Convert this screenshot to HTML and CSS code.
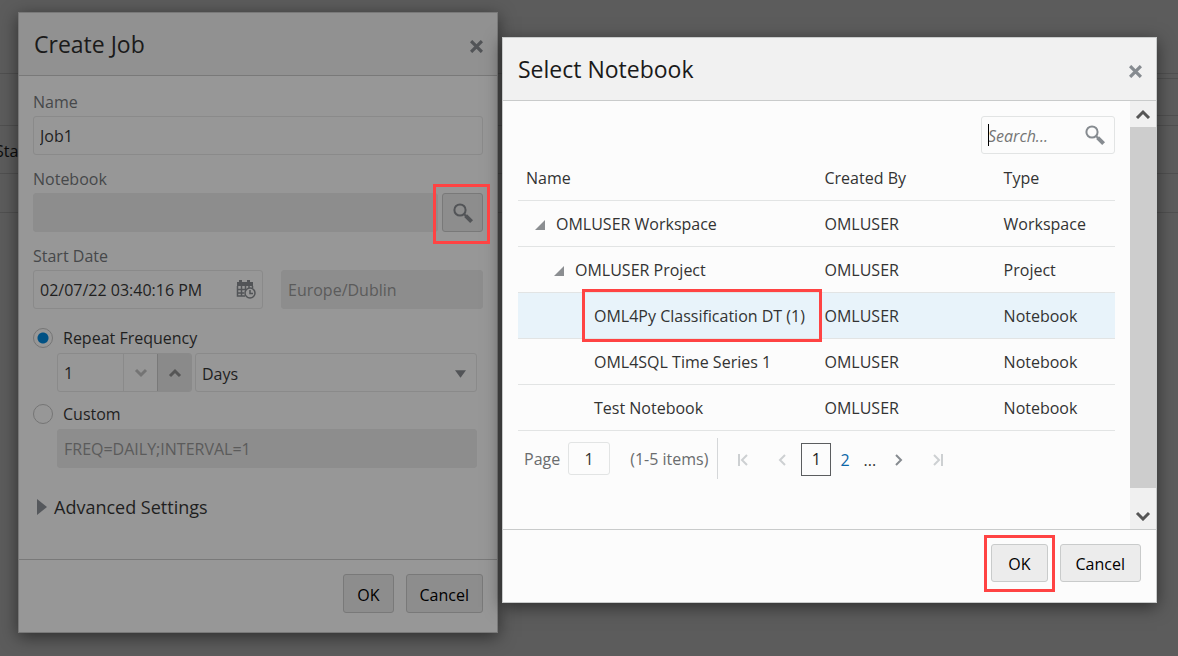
FILE: index.html
```
<!DOCTYPE html>
<html lang="en">
<head>
<meta charset="utf-8">
<meta name="viewport" content="width=device-width, initial-scale=1">
<title>Create Job</title>
<link rel="stylesheet" href="styles.css">
</head>
<body>
<div class="backdrop" aria-hidden="true">
  <div class="line line-title"></div>
  <div class="line line-toolbar"><div class="toolbar-box"></div></div>
  <div class="line line-head"><span>Start</span></div>
  <div class="line line-row"></div>
</div>

<main class="stage">
  <section class="dialog dialog-job" aria-labelledby="job-title">
    <header class="dialog-head">
      <h1 id="job-title">Create Job</h1>
      <button class="close" type="button" aria-label="Close"><svg viewBox="0 0 12 12"><path d="M1 1l10 10M11 1L1 11"/></svg></button>
    </header>
    <form class="job-body" id="job-form">
      <div class="field">
        <label for="name">Name</label>
        <input id="name" class="text" type="text" value="Job1">
      </div>
      <div class="field">
        <label for="notebook">Notebook</label>
        <div class="notebook-row">
          <input id="notebook" class="text muted" type="text" readonly>
          <button class="btn lookup marked" type="button" aria-label="Select notebook"><svg viewBox="0 0 20 20"><circle cx="7" cy="7" r="5.6"/><path class="grip" d="M11 11l2 2"/><path class="handle" d="M12.6 12.6l6 6"/></svg></button>
        </div>
      </div>
      <div class="field">
        <label for="start">Start Date</label>
        <div class="date-row">
          <div class="date">
            <input id="start" class="text" type="text" value="02/07/22 03:40:16 PM">
            <button class="icon" type="button" aria-label="Select date and time"><svg viewBox="0 0 20 20"><path class="fill" d="M1 3h2V1h3v2h5V1h3v2h3v4H1z"/><path d="M1.5 7v10H9M16.500 7v2M5.500 7v10M9.500 7v4M13 7v2M1 10.500h9M1 14h7"/><circle cx="14" cy="14" r="5"/><path d="M14 11v3.500h3"/></svg></button>
          </div>
          <input class="text muted" type="text" value="Europe/Dublin" aria-label="Time zone" readonly>
        </div>
      </div>
      <div class="choice choice-repeat">
        <label><input type="radio" name="freq" checked>Repeat Frequency</label>
        <div class="repeat-row">
          <div class="spinner">
            <input class="text" type="text" value="1" aria-label="Interval">
            <button class="down" type="button" aria-label="Decrease"><svg viewBox="0 0 14 10"><path d="M2 2l5 5 5-5"/></svg></button>
            <button class="up" type="button" aria-label="Increase"><svg viewBox="0 0 14 10"><path d="M2 8l5-5 5 5"/></svg></button>
          </div>
          <div class="select">
            <select aria-label="Unit"><option>Days</option></select>
            <svg viewBox="0 0 12 8"><path d="M0 0h12L6 8z"/></svg>
          </div>
        </div>
      </div>
      <div class="choice">
        <label><input type="radio" name="freq">Custom</label>
        <input class="text muted custom" type="text" value="FREQ=DAILY;INTERVAL=1" aria-label="Custom frequency" readonly>
      </div>
      <button class="advanced" type="button" aria-expanded="false"><svg viewBox="0 0 10 16"><path d="M0 0l10 8-10 8z"/></svg>Advanced Settings</button>
    </form>
    <footer class="dialog-foot">
      <button class="btn" type="submit" form="job-form">OK</button>
      <button class="btn" type="button">Cancel</button>
    </footer>
  </section>

  <section class="dialog dialog-select" aria-labelledby="select-title">
    <header class="dialog-head">
      <h2 id="select-title">Select Notebook</h2>
      <button class="close" type="button" aria-label="Close"><svg viewBox="0 0 12 12"><path d="M1 1l10 10M11 1L1 11"/></svg></button>
    </header>
    <div class="scroller">
      <div class="select-body">
        <div class="search">
          <span class="caret"></span>
          <input type="search" placeholder="Search..." aria-label="Search">
          <button class="icon" type="button" aria-label="Search"><svg viewBox="0 0 20 20"><circle cx="7" cy="7" r="5.600"/><path class="grip" d="M11 11l2 2"/><path class="handle" d="M12.600 12.600l6 6"/></svg></button>
        </div>
        <table>
          <thead>
            <tr><th class="col-name">Name</th><th class="col-by">Created By</th><th>Type</th></tr>
          </thead>
          <tbody>
            <tr><td class="level-1"><svg class="tree" viewBox="0 0 10 10"><path d="M10 0v10H0z"/></svg>OMLUSER Workspace</td><td>OMLUSER</td><td>Workspace</td></tr>
            <tr><td class="level-2"><svg class="tree" viewBox="0 0 10 10"><path d="M10 0v10H0z"/></svg>OMLUSER Project</td><td>OMLUSER</td><td>Project</td></tr>
            <tr class="selected"><td class="level-3 marked">OML4Py Classification DT (1)</td><td>OMLUSER</td><td>Notebook</td></tr>
            <tr><td class="level-3">OML4SQL Time Series 1</td><td>OMLUSER</td><td>Notebook</td></tr>
            <tr><td class="level-3">Test Notebook</td><td>OMLUSER</td><td>Notebook</td></tr>
          </tbody>
        </table>
        <nav class="pager" aria-label="Pages">
          <div class="pager-input">
            <label for="page">Page</label>
            <input id="page" type="text" value="1">
            <span>(1-5 items)</span>
          </div>
          <div class="pager-nav">
            <button type="button" aria-label="First page" disabled><svg viewBox="0 0 12 12"><path d="M2 0v12M10 1L5 6l5 5"/></svg></button>
            <button type="button" aria-label="Previous page" disabled><svg viewBox="0 0 12 12"><path d="M9 1L4 6l5 5"/></svg></button>
            <span class="pages">
              <a class="current" href="#1" aria-current="page">1</a>
              <a href="#2">2</a>
              <span>...</span>
            </span>
            <button type="button" aria-label="Next page"><svg viewBox="0 0 12 12"><path d="M3 1l5 5-5 5"/></svg></button>
            <button type="button" aria-label="Last page" disabled><svg viewBox="0 0 12 12"><path d="M2 1l5 5-5 5M10 0v12"/></svg></button>
          </div>
        </nav>
      </div>
      <div class="scrollbar" aria-hidden="true">
        <svg viewBox="0 0 16 10"><path d="M2 9l6-6 6 6"/></svg>
        <div class="thumb"></div>
        <svg viewBox="0 0 16 10"><path d="M2 2l6 6 6-6"/></svg>
      </div>
    </div>
    <footer class="dialog-foot">
      <button class="btn ok marked" type="button">OK</button>
      <button class="btn" type="button">Cancel</button>
    </footer>
  </section>
</main>
</body>
</html>
```
FILE: styles.css
```
* { box-sizing: border-box; }

body {
  margin: 0;
  min-height: 100vh;
  background: #5c5c5c;
  color: #333;
  font: 16px/22px "Open Sans", "Noto Sans", sans-serif;
  position: relative;
  overflow: hidden;
}

button, input, select { font: inherit; color: inherit; margin: 0; }
button { padding: 0; border: 0; background: none; }
input { min-width: 0; }
svg { display: block; fill: none; stroke: currentColor; stroke-width: 2; }
h1, h2 { margin: 0; font-size: 23px; line-height: 32px; font-weight: 400; }

/* Dimmed page behind the dialogs */
.backdrop { position: absolute; inset: 0; color: #0c0c0c; }
.line { border-bottom: 1px solid #505050; }
.line-title { height: 74px; }
.line-toolbar { height: 52px; padding: 4px 0 10px; }
.toolbar-box { height: 38px; margin-left: 600px; border: solid #505050; border-width: 1px 0; }
.line-head { height: 48px; padding-top: 14px; }
.line-head span { margin-left: -5px; }
.line-row { height: 39px; }

.stage {
  position: relative;
  display: grid;
  grid-template-columns: 480fr 655fr;
  align-items: start;
  gap: 4px;
  padding: 12px 21px 23px 18px;
}

.dialog {
  position: relative;
  display: flex;
  flex-direction: column;
  border: 1px solid var(--edge);
  background: var(--surface);
  box-shadow: 0 4px 16px rgba(0, 0, 0, .5);
}
.dialog-job {
  --edge: #797979;
  --surface: #979797;
  --head: #919191;
  --rule: #8a8a8a;
  --btn: #8d8d8d;
  --icon: #525457;
  color: #1f1f1f;
}
.dialog-select {
  --edge: #c9cbcb;
  --surface: #fcfcfc;
  --head: #f1f1f1;
  --rule: #e2e4e4;
  --btn: #ececec;
  --icon: #868b90;
  margin-top: 25px;
}
.dialog-head {
  display: flex;
  align-items: center;
  justify-content: space-between;
  height: 63px;
  padding: 0 14px 0 15px;
  border-bottom: 1px solid var(--edge);
  background: var(--head);
  color: #1a1a1a;
}
.close { color: var(--icon); padding-top: 4px; }
.close svg { width: 13px; height: 13px; stroke-width: 3; }
.dialog-foot {
  display: flex;
  justify-content: flex-end;
  gap: 12px;
  padding: 14px 14px 19px;
  border-top: 1px solid var(--edge);
}
.dialog-select .dialog-foot { padding: 14px 15px 20px; }
.btn {
  position: relative;
  height: 39px;
  padding: 0 13px;
  border: 1px solid var(--edge);
  border-radius: 3px;
  background: var(--btn);
  color: #000;
}
.dialog-foot .btn { padding-top: 2px; }
.dialog-select .btn { height: 38px; padding: 1px 15px 0; }
.dialog-select .ok { padding: 1px 16px 0; }

/* Red call-out frames */
.marked { position: relative; }
.marked::after {
  content: "";
  position: absolute;
  z-index: 1;
  border: 3px solid #ff4343;
  pointer-events: none;
}
.lookup::after { inset: -10px -8px -13px -10px; }
.ok::after { inset: -10px -8px -11px -8px; }
td.marked::after { inset: -4px -5px -4px 64px; }

/* Create Job form */
.job-body { display: flex; flex-direction: column; gap: 13px; padding: 15px 14px 39px; }
.field { display: flex; flex-direction: column; gap: 3px; }
.field label { color: #46484a; }
.text {
  width: 100%;
  height: 39px;
  padding: 0 6px;
  border: 1px solid var(--rule);
  border-radius: 3px;
  background: transparent;
  outline: 0;
}
.muted { background: #8d8d8d; border-color: #8d8d8d; color: #5b5b5b; }
.notebook-row { display: flex; gap: 4px; }
.lookup { flex: none; width: 41px; padding: 0; display: grid; place-items: center; color: var(--icon); }
.lookup svg, .search svg { width: 20px; height: 20px; }
.grip { stroke-width: 2; }
.handle { stroke-width: 4; }
.date-row { display: grid; grid-template-columns: 230fr 202fr; gap: 18px; }
.date, .search { position: relative; }
.icon { position: absolute; top: 9px; right: 7px; color: var(--icon); }
.date .icon svg { width: 20px; height: 20px; stroke-width: 1.5; }
.fill { fill: currentColor; stroke: none; }

.choice label { display: flex; align-items: center; gap: 10px; margin-bottom: 4px; }
.choice-repeat { margin-top: 5px; }
.choice + .choice { margin-top: -2px; }
.choice input[type="radio"] {
  appearance: none;
  width: 20px;
  height: 20px;
  border: 1px solid #757575;
  border-radius: 50%;
}
.choice input[type="radio"]:checked { background: radial-gradient(circle, #005184 5px, transparent 6px); }
.repeat-row { display: flex; gap: 3px; margin: 0 6px 0 24px; }
.spinner { flex: none; display: flex; width: 135px; border: 1px solid var(--rule); border-radius: 3px; overflow: hidden; }
.spinner .text { width: 65px; height: 37px; border: 0; }
.spinner button { flex: 1; display: grid; place-items: center; border-left: 1px solid var(--rule); color: #747474; }
.spinner .up { background: #8a8a8a; border-color: #797979; color: #555; }
.spinner svg { width: 14px; height: 10px; stroke-width: 3; }
.select { position: relative; flex: 1; }
.select select {
  appearance: none;
  width: 100%;
  height: 39px;
  padding: 2px 6px 0;
  border: 1px solid var(--rule);
  border-radius: 3px;
  background: transparent;
}
.select svg { position: absolute; right: 11px; top: 17px; width: 11px; height: 8px; fill: #525457; stroke: none; }
.custom { display: block; width: auto; margin: 0 6px 0 24px; min-width: calc(100% - 30px); }
.advanced {
  display: flex;
  align-items: center;
  gap: 7px;
  margin-top: 13px;
  padding-left: 4px;
  font-size: 18px;
  line-height: 26px;
  align-self: flex-start;
}
.advanced svg { width: 10px; height: 16px; fill: #55585c; stroke: none; }

/* Select Notebook content */
.scroller { display: flex; }
.select-body { flex: 1; min-width: 0; padding: 15px 15px 50px; }
.search {
  width: 134px;
  height: 38px;
  margin-left: auto;
  border: 1px solid var(--rule);
  border-radius: 3px;
}
.search input {
  width: 100%;
  height: 36px;
  padding: 1px 36px 0 6px;
  border: 0;
  background: transparent;
  outline: 0;
  appearance: none;
}
.search input::placeholder { color: #757575; font-style: italic; opacity: 1; }
.caret { position: absolute; left: 6px; top: 7px; width: 1px; height: 22px; background: #000; }
.search .icon { top: 8px; right: 9px; }

table { width: 100%; border-collapse: separate; border-spacing: 0; table-layout: fixed; }
th, td {
  height: 46px;
  padding: 1px 0 0 8px;
  border-bottom: 1px solid var(--rule);
  font-weight: 400;
  text-align: left;
  white-space: nowrap;
}
th { height: 47px; }
.col-name { width: 50%; }
.col-by { width: 30%; }
td.level-1 { padding-left: 17px; }
td.level-2 { padding-left: 36px; }
td.level-3 { padding-left: 76px; }
.tree { display: inline-block; width: 10px; height: 10px; margin-right: 11px; fill: #8b8e91; stroke: none; }
.selected td { background: #e8f3fa; }

.pager { display: flex; align-items: center; padding-top: 7px; color: #6a6c6e; }
.pager-input { display: flex; align-items: center; height: 41px; padding-left: 6px; padding-right: 9px; border-right: 1px solid #d5d7d9; }
.pager-input input {
  width: 42px;
  height: 33px;
  margin: 0 20px 0 8px;
  border: 1px solid var(--rule);
  border-radius: 3px;
  background: transparent;
  color: #333;
  text-align: center;
}
.pager-nav { display: flex; align-items: center; gap: 23px; padding: 2px 0 0 19px; }
.pager-nav svg { width: 12px; height: 12px; }
.pager-nav button { color: #868b90; }
.pager-nav button:first-child { margin-right: 4px; }
.pager-nav button:last-child { margin-left: 4px; }
.pager-nav button:disabled { color: #cdd0d2; }
.pages { display: flex; align-items: center; gap: 14px; margin: 0 -6px 0 -10px; color: #333; }
.pages a { color: #0b66a8; text-decoration: none; }
.pages a.current { width: 30px; height: 33px; line-height: 31px; margin-right: -5px; border: 1px solid #5b5d5f; color: #222; text-align: center; }

.scrollbar { display: flex; flex-direction: column; align-items: center; width: 26px; background: #f0f0f0; color: #555; }
.scrollbar svg { width: 16px; height: 10px; margin: 8px 0; stroke-width: 3; }
.thumb { flex: 1; width: 100%; margin-bottom: 15px; background: #cdcdcd; }
```
